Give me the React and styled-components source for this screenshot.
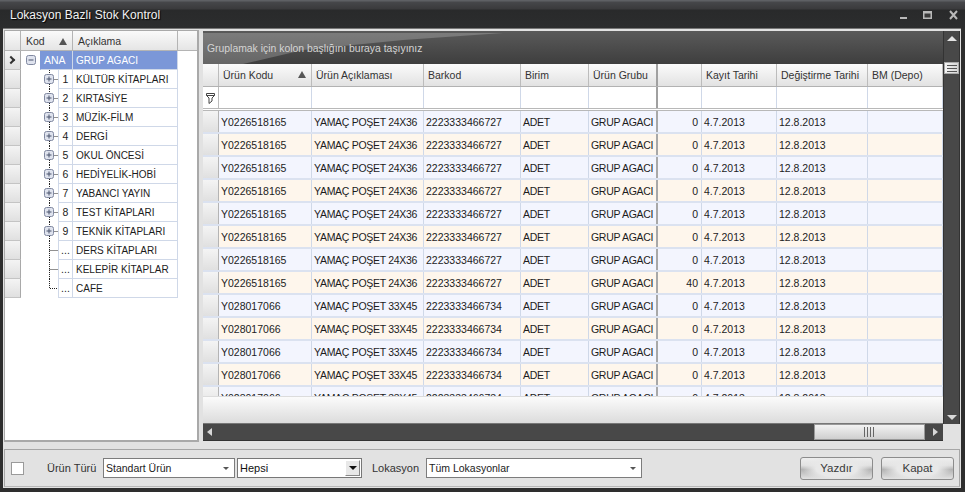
import styled, { createGlobalStyle } from "styled-components";

const GlobalStyle = createGlobalStyle`
  html, body {
    margin: 0;
    padding: 0;
    background: #2e2e2e;
  }
  * {
    box-sizing: border-box;
  }
`;

const COLUMNS = "16px 93px 112px 97px 68px 69px 44px 75px 91px 75px";

const TREE = [
  { code: "ANA", name: "GRUP AGACI", root: true },
  { code: "1", name: "KÜLTÜR KİTAPLARI", kids: true },
  { code: "2", name: "KIRTASİYE", kids: true },
  { code: "3", name: "MÜZİK-FİLM", kids: true },
  { code: "4", name: "DERGİ", kids: true },
  { code: "5", name: "OKUL ÖNCESİ", kids: true },
  { code: "6", name: "HEDİYELİK-HOBİ", kids: true },
  { code: "7", name: "YABANCI YAYIN", kids: true },
  { code: "8", name: "TEST KİTAPLARI", kids: true },
  { code: "9", name: "TEKNİK KİTAPLARI", kids: true },
  { code: "...", name: "DERS KİTAPLARI" },
  { code: "...", name: "KELEPİR KİTAPLAR" },
  { code: "...", name: "CAFE", last: true },
];

const HEADERS = ["Ürün Kodu", "Ürün Açıklaması", "Barkod", "Birim", "Ürün Grubu", "", "Kayıt Tarihi", "Değiştirme Tarihi", "BM (Depo)"];

const A = { code: "Y0226518165", desc: "YAMAÇ POŞET 24X36", bar: "2223333466727", qty: 0 };
const B = { code: "Y028017066", desc: "YAMAÇ POŞET 33X45", bar: "2223333466734", qty: 0 };
const ROWS = [A, A, A, A, A, A, A, { ...A, qty: 40 }, B, B, B, B, B];

const BoxIcon = ({ minus }) => (
  <g>
    <rect x="0.5" y="0.5" width="9" height="9" rx="2" fill="#dfe3ee" stroke="#8088a0" />
    <path d="M2.5 5h5" stroke="#47506a" />
    {!minus && <path d="M5 2.5v5" stroke="#47506a" />}
  </g>
);

const TreeLines = ({ item }) => {
  if (item.root) {
    return (
      <svg width="19" height="18">
        <g transform="translate(5 4)"><BoxIcon minus /></g>
      </svg>
    );
  }
  return (
    <svg width="37" height="18">
      <path
        d={item.last ? "M28.5 0v9.5H37" : "M28.5 0v19M28.5 9.5H37"}
        stroke="#222"
        strokeDasharray="1 1"
        fill="none"
      />
      {item.kids && <g transform="translate(23 4)"><BoxIcon /></g>}
    </svg>
  );
};

const ScrollGrip = ({ vertical }) => (
  <svg width={vertical ? 10 : 12} height={vertical ? 7 : 10}>
    {vertical ? (
      <path d="M0 .5h10M0 3.5h10M0 6.5h10" stroke="#555" />
    ) : (
      <path d="M.5 0v10M3.5 0v10M6.5 0v10M9.5 0v10" stroke="#666" />
    )}
  </svg>
);

export default function App() {
  return (
    <>
      <GlobalStyle />
      <Window>
        <TitleBar>
          <Title>Lokasyon Bazlı Stok Kontrol</Title>
          <WindowButtons>
            <svg width="60" height="14" viewBox="0 0 60 14">
              <rect x="1" y="9" width="7" height="2" fill="#b9b9b9" />
              <rect x="24" y="3" width="9" height="8" fill="#b9b9b9" />
              <rect x="25.5" y="5.5" width="6" height="4" fill="#3a3a3a" />
              <path d="M51 3l7 8M58 3l-7 8" stroke="#b9b9b9" strokeWidth="2" />
            </svg>
          </WindowButtons>
        </TitleBar>
        <Content>
          <MainRow>
            <TreePanel>
              <TreeHeader>
                <HeaderBlank />
                <TreeHead>
                  Kod
                  <SortArrow />
                </TreeHead>
                <TreeHead>Açıklama</TreeHead>
                <HeaderBlank $wide />
              </TreeHeader>
              {TREE.map((item, i) => (
                <TreeRow key={i}>
                  <Indicator>{item.root && <RowMark />}</Indicator>
                  <TreeArea $root={item.root}>
                    <TreeLines item={item} />
                  </TreeArea>
                  <CodeCell $selected={item.root} $root={item.root}>{item.code}</CodeCell>
                  <NameCell $selected={item.root}>{item.name}</NameCell>
                </TreeRow>
              ))}
            </TreePanel>
            <GridPanel>
              <GridBody>
                <GroupBar>
                  <GroupText>Gruplamak için kolon başlığını buraya taşıyınız</GroupText>
                </GroupBar>
                <HeaderRow>
                  <HeaderCell />
                  {HEADERS.map((h, i) => (
                    <HeaderCell key={i} $thick={i === 4}>
                      {h}
                      {i === 0 && <SortArrow />}
                    </HeaderCell>
                  ))}
                </HeaderRow>
                <FilterRow>
                  <FilterIcon>
                    <svg width="9" height="11" viewBox="0 0 9 11">
                      <path d="M.5.5h8v2L6 5v3L3 10.5V5L.5 2.5zM.5 2.5h8" fill="none" stroke="#444" />
                    </svg>
                  </FilterIcon>
                  {HEADERS.map((h, i) => (
                    <FilterCell key={i} $thick={i === 4} />
                  ))}
                </FilterRow>
                <Rows>
                  {ROWS.map((r, i) => (
                    <DataRow key={i}>
                      <RowHead />
                      <DataCell $odd={i % 2}>{r.code}</DataCell>
                      <DataCell $odd={i % 2} $caps>{r.desc}</DataCell>
                      <DataCell $odd={i % 2}>{r.bar}</DataCell>
                      <DataCell $odd={i % 2} $caps>ADET</DataCell>
                      <DataCell $odd={i % 2} $caps $thick>GRUP AGACI</DataCell>
                      <DataCell $odd={i % 2} $right>{r.qty}</DataCell>
                      <DataCell $odd={i % 2}>4.7.2013</DataCell>
                      <DataCell $odd={i % 2}>12.8.2013</DataCell>
                      <DataCell $odd={i % 2} />
                    </DataRow>
                  ))}
                </Rows>
                <GridFooter />
              </GridBody>
              <VScroll>
                <ArrowUp />
                <VThumb><ScrollGrip vertical /></VThumb>
                <ArrowDown />
              </VScroll>
              <HScroll>
                <ArrowLeft />
                <HThumb><ScrollGrip /></HThumb>
                <ArrowRight />
              </HScroll>
            </GridPanel>
          </MainRow>
          <Footer>
            <CheckBox />
            <FieldLabel $gap="8px">Ürün Türü</FieldLabel>
            <Select $width="132px">
              Standart Ürün
              <SmallCaret />
            </Select>
            <Combo>
              Hepsi
              <ComboButton><ComboCaret /></ComboButton>
            </Combo>
            <FieldLabel $gap="6px">Lokasyon</FieldLabel>
            <Select $width="216px">
              Tüm Lokasyonlar
              <SmallCaret />
            </Select>
            <Buttons>
              <PushButton>Yazdır</PushButton>
              <PushButton>Kapat</PushButton>
            </Buttons>
          </Footer>
        </Content>
      </Window>
    </>
  );
}

const Window = styled.div`
  width: 965px;
  height: 492px;
  display: flex;
  flex-direction: column;
  font-family: "Liberation Sans", Arial, sans-serif;
  font-size: 10.5px;
  color: #1c1c1c;
  background: #2e2e2e;
  overflow: hidden;
`;

const TitleBar = styled.div`
  height: 28px;
  flex: none;
  display: flex;
  align-items: center;
  justify-content: space-between;
  padding: 2px 6px 0 10px;
  background: linear-gradient(#5e6064 0, #5e6064 1px, #46474a 2px, #3a3a3c 9px, #292a2b 10px, #2c2d2e 100%);
`;

const Title = styled.div`
  font-size: 12px;
  color: #f2f2f2;
  text-shadow: 1px 1px 1px #000;
`;

const WindowButtons = styled.div`
  display: flex;
`;

const Content = styled.div`
  flex: 1;
  margin: 0 4px 4px 3px;
  padding: 1px 1px 0 1px;
  background: #e2e2e2;
  border-top: 1px solid #777;
  display: flex;
  flex-direction: column;
`;

const MainRow = styled.div`
  height: 412px;
  flex: none;
  display: flex;
  gap: 4px;
`;

const TreePanel = styled.div`
  width: 195px;
  flex: none;
  background: #fff;
  border: 1px solid #a9a9a9;
  border-right-width: 2px;
  border-bottom-width: 2px;
`;

const TreeHeader = styled.div`
  height: 20px;
  display: grid;
  grid-template-columns: 16px 52px 105px 19px;
  background: linear-gradient(#fafafa, #e4e4e4);
`;

const HeaderBlank = styled.div`
  border-right: ${(p) => (p.$wide ? "0" : "1px solid #b4b4b4")};
  border-bottom: 1px solid #b4b4b4;
`;

const TreeHead = styled.div`
  position: relative;
  display: flex;
  align-items: center;
  padding: 0 8px 0 5px;
  border-right: 1px solid #b4b4b4;
  border-bottom: 1px solid #b4b4b4;
  color: #333;
`;

const SortArrow = styled.span`
  position: absolute;
  right: 5px;
  top: 7px;
  width: 0;
  height: 0;
  border-left: 4px solid transparent;
  border-right: 4px solid transparent;
  border-bottom: 7px solid #555;
`;

const TreeRow = styled.div`
  height: 19px;
  display: flex;
`;

const Indicator = styled.div`
  width: 16px;
  flex: none;
  display: flex;
  align-items: center;
  justify-content: center;
  background: linear-gradient(#f4f4f4, #e0e0e0);
  border-right: 1px solid #a9a9a9;
  border-bottom: 1px solid #c4c4c4;
`;

const RowMark = styled.span`
  width: 6px;
  height: 6px;
  margin-right: 3px;
  border-top: 2px solid #333;
  border-right: 2px solid #333;
  transform: rotate(45deg);
`;

const TreeArea = styled.div`
  width: ${(p) => (p.$root ? "19px" : "37px")};
  flex: none;
  height: 19px;
  & svg {
    display: block;
    overflow: visible;
  }
`;

const CodeCell = styled.div`
  width: ${(p) => (p.$root ? "33px" : "15px")};
  flex: none;
  display: flex;
  align-items: center;
  justify-content: ${(p) => (p.$root ? "flex-start" : "center")};
  padding-left: ${(p) => (p.$root ? "3px" : "0")};
  background: ${(p) => (p.$selected ? "#7b97d8" : "#fff")};
  color: ${(p) => (p.$selected ? "#fff" : "#1c1c1c")};
  border-left: 1px solid ${(p) => (p.$selected ? "#7b97d8" : "#cfd8e8")};
  border-right: 1px solid #cfd8e8;
  border-bottom: 1px solid #cfd8e8;
`;

const NameCell = styled.div`
  width: 105px;
  flex: none;
  display: flex;
  align-items: center;
  padding-left: 3px;
  font-size: 10px;
  white-space: nowrap;
  background: ${(p) => (p.$selected ? "#7b97d8" : "#fff")};
  color: ${(p) => (p.$selected ? "#fff" : "#1c1c1c")};
  border-right: 1px solid #cfd8e8;
  border-bottom: 1px solid #cfd8e8;
`;

const GridPanel = styled.div`
  width: 757px;
  flex: none;
  display: grid;
  grid-template-columns: 740px 17px;
  grid-template-rows: 393px 17px;
  margin-top: 1px;
  background: #e2e2e2;
`;

const GridBody = styled.div`
  display: flex;
  flex-direction: column;
  min-height: 0;
  background: #fff;
`;

const GroupBar = styled.div`
  height: 33px;
  flex: none;
  position: relative;
  display: flex;
  align-items: flex-end;
  padding: 0 0 10px 4px;
  background: linear-gradient(#5a5a5a, #3e3e3e);
  &::before {
    content: "";
    position: absolute;
    inset: 0;
    background: linear-gradient(#7d7d7d, #666);
    clip-path: polygon(0 2px, 300px 2px, 200px 9px, 100px 19px, 40px 33px, 0 33px);
  }
`;

const GroupText = styled.span`
  position: relative;
  font-size: 10.4px;
  color: #d4d4d4;
`;

const HeaderRow = styled.div`
  height: 23px;
  flex: none;
  display: grid;
  grid-template-columns: ${COLUMNS};
  background: linear-gradient(#fbfbfb, #e2e2e2);
  border-bottom: 1px solid #b2b2b2;
  border-top-right-radius: 6px;
`;

const HeaderCell = styled.div`
  position: relative;
  display: flex;
  align-items: center;
  padding-left: 4px;
  color: #333;
  white-space: nowrap;
  border-right: ${(p) => (p.$thick ? "2px solid #a0a0a0" : "1px solid #bcbcbc")};
`;

const FilterRow = styled.div`
  height: 24px;
  flex: none;
  display: grid;
  grid-template-columns: ${COLUMNS};
  background: #fff;
  border-bottom: 3px double #b8b8b8;
`;

const FilterIcon = styled.div`
  display: flex;
  align-items: center;
  justify-content: center;
  padding-top: 1px;
  border-right: 1px solid #bcbcbc;
`;

const FilterCell = styled.div`
  border-right: ${(p) => (p.$thick ? "2px solid #a0a0a0" : "1px solid #cfd8e8")};
`;

const Rows = styled.div`
  flex: 1;
  min-height: 0;
  overflow: hidden;
`;

const DataRow = styled.div`
  height: 23px;
  display: grid;
  grid-template-columns: ${COLUMNS};
  border-bottom: 2px solid #dbe2f0;
`;

const RowHead = styled.div`
  background: linear-gradient(#f4f4f4, #e0e0e0);
  border-right: 1px solid #b4b4b4;
`;

const DataCell = styled.div`
  display: flex;
  align-items: center;
  justify-content: ${(p) => (p.$right ? "flex-end" : "flex-start")};
  padding: ${(p) => (p.$right ? "0 3px 0 0" : "0 0 0 2px")};
  letter-spacing: ${(p) => (p.$caps ? "-0.3px" : "0")};
  white-space: nowrap;
  background: ${(p) => (p.$odd ? "#fef6ec" : "#f3f5fe")};
  border-right: ${(p) => (p.$thick ? "2px solid #a8a8a8" : "1px solid #cfd8e8")};
`;

const GridFooter = styled.div`
  height: 28px;
  flex: none;
  background: linear-gradient(#fbfbfb, #dcdcdc);
  border-bottom: 1px solid #777;
  border-top: 1px solid #dcdcdc;
`;

const VScroll = styled.div`
  position: relative;
  background: #484848;
  display: flex;
  flex-direction: column;
  align-items: center;
  justify-content: space-between;
  padding: 5px 0 4px;
  border-left: 1px solid #333;
  border-right: 1px solid #333;
`;

const VThumb = styled.div`
  position: absolute;
  left: 0;
  top: 31px;
  width: 15px;
  height: 12px;
  display: flex;
  align-items: center;
  justify-content: center;
  background: linear-gradient(90deg, #f4f4f4, #d6d6d6);
  border: 1px solid #aaa;
`;

const HScroll = styled.div`
  grid-column: 1;
  grid-row: 2;
  position: relative;
  display: flex;
  align-items: center;
  justify-content: space-between;
  padding: 0 5px 0 4px;
  background: #484848;
  border-bottom: 1px solid #333;
`;

const HThumb = styled.div`
  position: absolute;
  left: 611px;
  top: 0;
  width: 111px;
  height: 16px;
  display: flex;
  align-items: center;
  justify-content: center;
  background: linear-gradient(#f2f2f2, #cfcfcf);
  border: 1px solid #999;
`;

const ArrowUp = styled.span`
  width: 0;
  height: 0;
  border-left: 5px solid transparent;
  border-right: 5px solid transparent;
  border-bottom: 5px solid #e4e4e4;
`;

const ArrowDown = styled.span`
  width: 0;
  height: 0;
  border-left: 5px solid transparent;
  border-right: 5px solid transparent;
  border-top: 5px solid #d8d8d8;
`;

const ArrowLeft = styled.span`
  width: 0;
  height: 0;
  border-top: 4px solid transparent;
  border-bottom: 4px solid transparent;
  border-right: 5px solid #d8d8d8;
`;

const ArrowRight = styled.span`
  width: 0;
  height: 0;
  border-top: 4px solid transparent;
  border-bottom: 4px solid transparent;
  border-left: 5px solid #d8d8d8;
`;

const Footer = styled.div`
  height: 38px;
  margin-top: 7px;
  flex: none;
  display: flex;
  align-items: center;
  padding: 0 5px 0 6px;
  border: 1px solid #a6a6a6;
  border-bottom-color: #b8b8b8;
`;

const CheckBox = styled.span`
  width: 13px;
  height: 13px;
  flex: none;
  background: #fff;
  border: 1px solid #9a9a9a;
  margin-right: 23px;
`;

const FieldLabel = styled.span`
  flex: none;
  width: 48px;
  font-size: 11px;
  color: #333;
  white-space: nowrap;
  margin-right: ${(p) => p.$gap};
`;

const Select = styled.div`
  position: relative;
  width: ${(p) => p.$width};
  height: 20px;
  flex: none;
  display: flex;
  align-items: center;
  padding-left: 2px;
  background: #fff;
  border: 1px solid #7c7c7c;
  margin-right: 2px;
`;

const SmallCaret = styled.span`
  position: absolute;
  right: 5px;
  top: 8px;
  width: 0;
  height: 0;
  border-left: 3px solid transparent;
  border-right: 3px solid transparent;
  border-top: 3px solid #555;
`;

const Combo = styled.div`
  position: relative;
  width: 125px;
  height: 20px;
  flex: none;
  display: flex;
  align-items: center;
  padding-left: 2px;
  margin-right: 10px;
  background: #fff;
  border: 1px solid #777;
  font-size: 11px;
  color: #111;
`;

const ComboButton = styled.span`
  position: absolute;
  right: 1px;
  top: 1px;
  width: 15px;
  height: 16px;
  display: flex;
  align-items: center;
  justify-content: center;
  background: #e8e8e8;
  border: 1px solid #888;
  border-top-color: #fff;
  border-left-color: #fff;
`;

const ComboCaret = styled.span`
  width: 0;
  height: 0;
  border-left: 4px solid transparent;
  border-right: 4px solid transparent;
  border-top: 4px solid #111;
`;

const Buttons = styled.div`
  display: flex;
  gap: 8px;
  margin-left: auto;
`;

const PushButton = styled.div`
  width: 73px;
  height: 23px;
  display: flex;
  align-items: center;
  justify-content: center;
  color: #3a3a3a;
  font-size: 11.5px;
  border: 1px solid #8c8c8c;
  border-radius: 3px;
  background:
    radial-gradient(ellipse 34px 14px at center, #e8e8e8 60%, rgba(232, 232, 232, 0)),
    linear-gradient(#eee, #e2e2e2 35%, #b4b4b4 55%, #e2e2e2);
`;
